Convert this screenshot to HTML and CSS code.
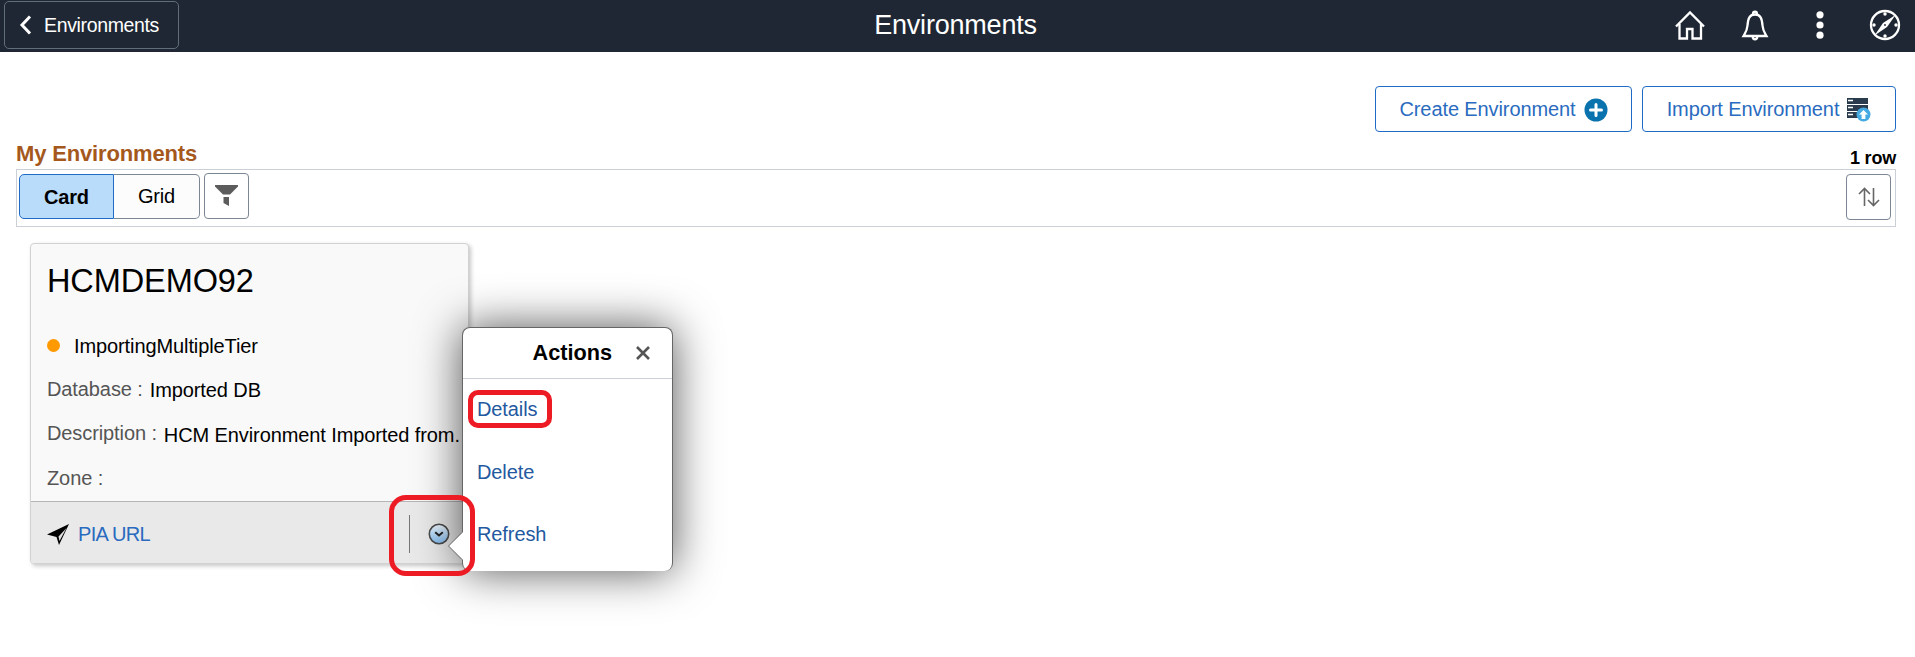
FILE: index.html
```html
<!DOCTYPE html>
<html lang="en">
<head>
<meta charset="utf-8">
<title>Environments</title>
<link rel="stylesheet" href="styles.css">
</head>
<body>
<header class="banner">
  <button class="back">
    <svg width="13" height="20" viewBox="0 0 13 20"><path d="M11 1.500 3 10l8 8.500" fill="none" stroke="#fff" stroke-width="3"/></svg>
    <span>Environments</span>
  </button>
  <h1 class="title">Environments</h1>
  <nav class="tools">
    <svg width="32" height="32" viewBox="0 0 32 32" fill="none" stroke="#fff" stroke-width="2.300"><path d="M2 17.500 16 3.500l14 14"/><path d="M5.500 15v14.500h7.500V20h5.500v9.500H27V15"/></svg>
    <svg width="32" height="32" viewBox="0 0 32 32" fill="none" stroke="#fff" stroke-width="2.300"><path d="M4.500 27h23c-2-3.500-3.500-5-4-10.500C23 9.500 21.500 5.500 16 5.500S9 9.500 8.500 16.500C8 22 6.500 23.500 4.500 27z"/><path d="M14 5c0-3 4-3 4 0M13.800 28c0 3 4.400 3 4.400 0"/></svg>
    <svg width="32" height="32" viewBox="0 0 32 32" fill="#fff"><circle cx="16" cy="5.800" r="3.600"/><circle cx="16" cy="16" r="3.600"/><circle cx="16" cy="26.200" r="3.600"/></svg>
    <svg width="32" height="32" viewBox="0 0 32 32"><circle cx="16" cy="16" r="14" fill="none" stroke="#fff" stroke-width="2.300"/><path d="M26.500 6 18 18 5.500 26.500 14 14z" fill="#fff"/><circle cx="16" cy="16" r=".9" fill="#1e2733"/><g fill="#fff"><circle cx="16" cy="5" r="1.700"/><circle cx="16" cy="27" r="1.700"/><circle cx="5" cy="16" r="1.700"/><circle cx="27" cy="16" r="1.700"/></g></svg>
  </nav>
</header>
<main class="page">
  <div class="page-actions">
    <button class="action create"><span>Create Environment</span>
      <svg width="24" height="24" viewBox="0 0 24 24"><circle cx="12" cy="12" r="11.500" fill="#0a73ad"/><path d="M12 6.500v11M6.500 12h11" stroke="#fff" stroke-width="3" stroke-linecap="round"/></svg>
    </button>
    <button class="action import"><span>Import Environment</span>
      <svg width="24" height="24" viewBox="0 0 24 24"><path d="M0 0h21v6H0zM0 7h21v6H0zM0 14h21v6H0z" fill="#2a3b4d"/><path d="M1 2.500h5M1 9.500h5M1 16.500h5" stroke="#fff" stroke-width="1.500"/><circle cx="16.500" cy="16.500" r="7" fill="#45aae2"/><path d="M16.500 12l4.500 4.500h-2.600v4.500h-3.800v-4.500H12z" fill="#fff"/></svg>
    </button>
  </div>
  <div class="list-head"><h2>My Environments</h2><span class="count">1 row</span></div>
  <div class="toolbar">
    <div class="views"><button class="view selected">Card</button><button class="view">Grid</button></div>
    <button class="filter"><svg width="23" height="22" viewBox="0 0 23 22" fill="#5c5c5c"><path d="M0 0h23v1.500L15 9.500H8L0 1.500zM8.500 12H14v9l-5.500-3z"/></svg></button>
    <button class="sort"><svg width="22" height="20" viewBox="0 0 22 20" fill="none" stroke="#666" stroke-width="1.600"><path d="M6.500 19V1.500M1 7l5.500-5.500L12 7M15.500 1v17.500M10 13l5.500 5.500L21 13"/></svg></button>
  </div>
  <article class="card">
    <div class="card-body">
      <h3>HCMDEMO92</h3>
      <div class="row tier"><i class="status"></i><span>ImportingMultipleTier</span></div>
      <div class="row"><span class="label">Database :</span><span>Imported DB</span></div>
      <div class="row"><span class="label">Description :</span><span class="wide">HCM Environment Imported from.</span></div>
      <div class="row"><span class="label">Zone :</span></div>
    </div>
    <footer class="card-foot">
      <svg width="23" height="23" viewBox="0 0 23 23"><path d="M22 1 12 22 9.500 14 0 11.500z" fill="#000"/><path d="M19.500 5 11.500 13.500l1 4.500z" fill="#ddd"/></svg>
      <a class="pia">PIA URL</a>
      <span class="menu">
        <svg width="22" height="22" viewBox="0 0 22 22"><defs><linearGradient id="ball" x2="0" y2="1"><stop offset="0" stop-color="#eef6fd"/><stop offset="1" stop-color="#83bdf0"/></linearGradient></defs><circle cx="11" cy="11" r="9.700" fill="url(#ball)" stroke="#4b4b4b" stroke-width="1.600"/><path d="M7.200 9.200 11 12.500l3.800-3.300" fill="none" stroke="#222" stroke-width="2"/></svg>
      </span>
    </footer>
  </article>
</main>
<section class="popup">
  <svg class="pointer" width="16" height="30" viewBox="0 0 16 30"><path d="M16 1 1.500 15 16 29z" fill="#fff"/><path d="M15 1.500 1.500 15 15 28.500" fill="none" stroke="#666" stroke-width="1"/></svg>
  <div class="popup-head"><h4>Actions</h4><svg width="14" height="14" viewBox="0 0 14 14"><path d="M1 1l12 12M13 1 1 13" stroke="#555" stroke-width="2.600"/></svg></div>
  <a class="item">Details</a>
  <a class="item">Delete</a>
  <a class="item">Refresh</a>
</section>
<div class="mark mark-details"></div>
<div class="mark mark-menu"></div>
</body>
</html>
```
FILE: styles.css
```css
* { box-sizing: border-box; }
body { margin: 0; height: 657px; overflow: hidden; background: #fff; color: #000; font: 20px "Liberation Sans", Arial, sans-serif; position: relative; }
h1, h2, h3, h4 { margin: 0; }
button { font: inherit; margin: 0; padding: 0; background: #fff; border: 1px solid #7b8794; border-radius: 4px; display: flex; align-items: center; justify-content: center; }
svg { display: block; flex: none; }

.banner { height: 52px; background: #1e2733; color: #fff; display: grid; grid-template-columns: 1fr auto 1fr; align-items: start; }
.back { width: 175px; height: 48px; margin: 1px 0 0 4px; background: none; border-color: #626d7b; border-radius: 5px; color: #fff; justify-content: flex-start; padding-left: 14px; gap: 12px; font-size: 19.500px; letter-spacing: -.35px; }
.title { font-size: 27px; font-weight: 400; line-height: 51px; letter-spacing: -.2px; position: relative; left: -2px; }
.tools { display: flex; justify-content: flex-end; gap: 33px; padding: 9px 14px 0 0; }

.page { padding: 34px 19px 0 16px; }
.page-actions { display: flex; justify-content: flex-end; gap: 10px; }
.action { height: 46px; border-color: #1f6cc7; color: #2a6bc0; gap: 8px; padding: 1px 0 0; letter-spacing: -.1px; }
.create { width: 257px; }
.import { width: 254px; }
.list-head { display: flex; justify-content: space-between; height: 37px; }
.list-head h2 { font-size: 22px; line-height: 43px; letter-spacing: -.15px; color: #a5581c; }
.count { font-size: 18px; font-weight: 700; line-height: 52px; letter-spacing: -.2px; }
.toolbar { height: 58px; border: 1px solid #cbd0d6; display: flex; padding: 3px 4px 0 2px; }
.views { display: flex; padding-top: 1px; }
.view { width: 86px; height: 45px; background: #fcfcfc; border-left: 0; border-radius: 0 5px 5px 0; padding-bottom: 1px; letter-spacing: -.2px; }
.selected { width: 95px; background: #b9dcfb; border: 1px solid #1f6cc7; border-radius: 5px 0 0 5px; font-weight: 700; padding: 1px 0 0; }
.filter { width: 45px; height: 46px; margin-left: 4px; }
.sort { width: 45px; height: 46px; margin: 1px 0 0 auto; }

.card { width: 439px; height: 321px; margin: 16px 0 0 14px; border: 1px solid #d2d2d2; border-radius: 4px; background: #f9f9f9; box-shadow: 2px 2px 4px rgba(0, 0, 0, .22); overflow: hidden; }
.card-body { height: 257px; padding: 15px 0 0 16px; }
.card h3 { font-size: 32.500px; font-weight: 400; line-height: 44px; height: 65px; letter-spacing: -.1px; }
.row { height: 44.400px; display: flex; align-items: center; gap: 7px; white-space: nowrap; letter-spacing: -.1px; }
.tier { gap: 8px; }
.wide { position: relative; top: 1px; }
.label { color: #555; position: relative; top: -1px; }
.status { width: 13px; height: 13px; border-radius: 50%; background: #f90; margin: 0 6px 1px 0; }
.card-foot { height: 62px; background: #e9e9e9; border-top: 1px solid #b5b5b5; display: flex; align-items: center; padding: 3px 18px 0 16px; }
.pia { color: #2a6bc0; margin-left: 8px; letter-spacing: -.7px; }
.menu { margin-left: auto; height: 38px; border-left: 1px solid #777; padding: 8px 0 0 18px; }

.popup { position: absolute; left: 462px; top: 327px; width: 211px; height: 244px; background: #fff; border: 1px solid #666; border-bottom: 0; border-radius: 8px; box-shadow: 0 0 45px rgba(0, 0, 0, .68); }
.pointer { position: absolute; left: -16px; top: 203px; }
.popup-head { height: 51px; border-bottom: 1px solid #cbd0d8; display: flex; align-items: center; justify-content: flex-end; gap: 24px; padding: 0 22px 0 0; }
.popup h4 { font-size: 21.700px; line-height: 50px; }
.item { display: block; height: 62.500px; line-height: 61.500px; padding-left: 14px; letter-spacing: -.1px; color: #23599f; }
.mark { position: absolute; border: 5px solid #ed1c24; }
.mark-details { left: 468px; top: 390px; width: 84px; height: 38px; border-radius: 10px; }
.mark-menu { left: 389px; top: 495px; width: 86px; height: 81px; border-radius: 17px; }
```
